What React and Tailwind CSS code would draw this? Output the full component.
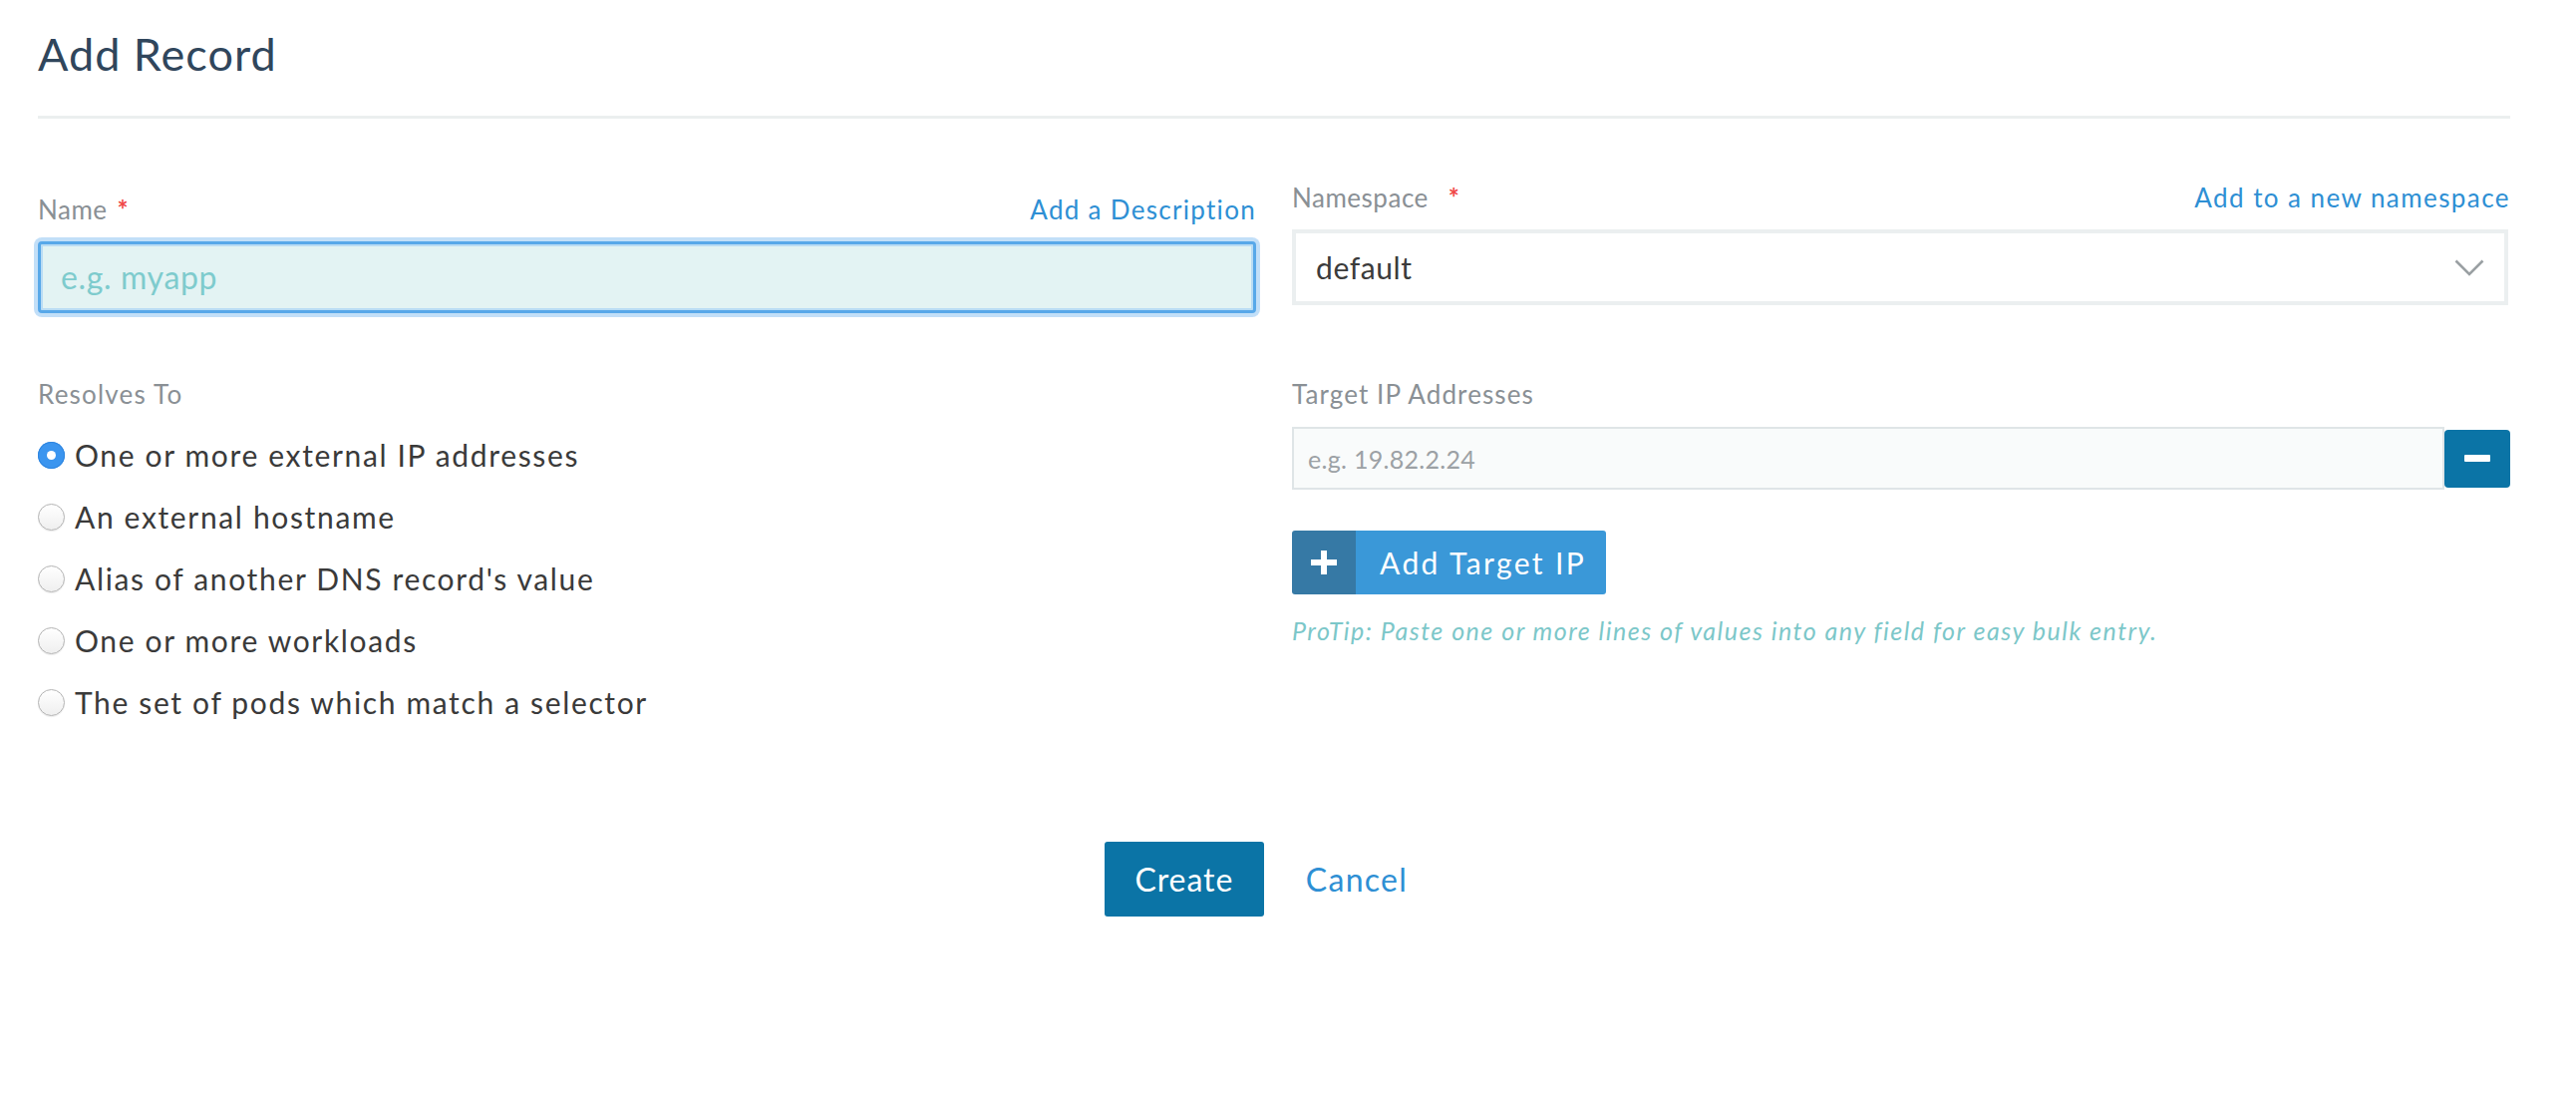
import React from "react";

function Radio({ checked }) {
  if (checked) {
    return (
      <span className="mt-[5px] flex h-[27px] w-[27px] shrink-0 items-center justify-center rounded-full bg-[#3b95ef] shadow-[inset_0_0_0_1px_#2f86e0]">
        <span className="h-[9px] w-[9px] rounded-full bg-white" />
      </span>
    );
  }
  return (
    <span className="mt-[5px] block h-[27px] w-[27px] shrink-0 rounded-full border border-[#b3b3b3] bg-gradient-to-b from-white to-[#efefef] shadow-[0_1px_1px_rgba(0,0,0,0.08)]" />
  );
}

const options = [
  "One or more external IP addresses",
  "An external hostname",
  "Alias of another DNS record's value",
  "One or more workloads",
  "The set of pods which match a selector",
];

export default function App() {
  return (
    <div className="min-h-[1112px] w-[2584px] bg-white font-['Lato',sans-serif]">
      <div className="ml-[38px] w-[2480px] pt-[27px]">
        <h1 className="text-[45px] font-normal leading-[54px] tracking-[0.022em] text-[#30465c]">Add Record</h1>
        <div className="mt-[35px] h-[3px] bg-[#ebefef]" />

        {/* Row 1 */}
        <div className="mt-[64px] grid grid-cols-2 items-start gap-x-[36px]">
          <div className="pt-[12px]">
            <div className="flex items-baseline justify-between text-[26px] leading-[31px]">
              <span className="tracking-[0.02em] text-[#8a9095]">
                Name<span className="ml-[10px] text-[26px] font-bold text-[#f04848]">*</span>
              </span>
              <span className="tracking-[0.05em] text-[#2e8fd4]">Add a Description</span>
            </div>
            <div className="mt-[16px] flex h-[72px] items-center rounded-[4px] border-[3px] border-[#58a8e9] bg-[#e3f3f3] pl-[20px] shadow-[0_0_0_4px_rgba(120,185,240,0.45),inset_0_0_0_2px_#b9dcf4]">
              <span className="text-[32px] leading-[38px] tracking-[0.02em] text-[#7ecbcd]">e.g. myapp</span>
            </div>
          </div>
          <div>
            <div className="flex items-baseline justify-between text-[26px] leading-[31px]">
              <span className="tracking-[0.02em] text-[#8a9095]">
                Namespace<span className="ml-[20px] text-[26px] font-bold text-[#f04848]">*</span>
              </span>
              <span className="tracking-[0.055em] text-[#2e8fd4]">Add to a new namespace</span>
            </div>
            <div className="mt-[16px] flex h-[76px] w-[1220px] items-center justify-between border-[4px] border-[#ebeff0] bg-white pl-[20px] pr-[20px]">
              <span className="text-[30px] leading-[36px] tracking-[0.02em] text-[#3b3b3b]">default</span>
              <svg width="30" height="17" viewBox="0 0 30 17" fill="none">
                <path d="M1.5 1.5 L15 15 L28.5 1.5" stroke="#9aa0a3" strokeWidth="2.6" />
              </svg>
            </div>
          </div>
        </div>

        {/* Row 2 */}
        <div className="mt-[66px] grid grid-cols-2 items-start gap-x-[36px]">
          <div>
            <div className="text-[26px] leading-[31px] tracking-[1.2px] text-[#8a9095]">Resolves To</div>
            <div className="mt-[27px] flex flex-col gap-[26px]">
              {options.map((o, i) => (
                <div key={o} className="flex h-[36px] items-start gap-[10px]">
                  <Radio checked={i === 0} />
                  <span className="text-[30px] leading-[36px] tracking-[1.65px] text-[#3a3a3a]">{o}</span>
                </div>
              ))}
            </div>
          </div>
          <div>
            <div className="text-[26px] leading-[31px] tracking-[1.1px] text-[#8a9095]">Target IP Addresses</div>
            <div className="mt-[17px] flex items-center">
              <div className="flex h-[63px] w-[1159px] items-center border-2 border-[#dfe5e7] bg-[#f9fbfb] pl-[14px]">
                <span className="text-[25px] leading-[30px] tracking-[0.3px] text-[#9ca1a5]">e.g. 19.82.2.24</span>
              </div>
              <div className="flex h-[58px] w-[66px] items-center justify-center rounded-[4px] bg-[#0b74a6]">
                <span className="block h-[7px] w-[26px] rounded-[1px] bg-white" />
              </div>
            </div>
            <div className="mt-[41px] flex h-[64px] w-fit overflow-hidden rounded-[3px]">
              <div className="flex w-[64px] items-center justify-center bg-[#3679a5]">
                <svg width="26" height="24" viewBox="0 0 26 24">
                  <rect x="0" y="9" width="26" height="6" fill="#ffffff" />
                  <rect x="10" y="0" width="6" height="24" fill="#ffffff" />
                </svg>
              </div>
              <div className="flex items-center bg-[#3a98d8] pl-[24px] pr-[20px]">
                <span className="text-[30px] leading-[36px] tracking-[0.08em] text-white">Add Target IP</span>
              </div>
            </div>
            <div className="mt-[22px] text-[25px] italic leading-[29px] tracking-[1.5px] text-[#7cc7c9]">
              ProTip: Paste one or more lines of values into any field for easy bulk entry.
            </div>
          </div>
        </div>

        {/* Footer */}
        <div className="mt-[122px] flex justify-center gap-[6px]">
          <button className="flex h-[75px] w-[160px] items-center justify-center rounded-[3px] bg-[#0b74a6] text-[32px] leading-[38px] tracking-[0.03em] text-white">
            Create
          </button>
          <button className="flex h-[75px] items-center px-[36px] text-[32px] leading-[38px] tracking-[0.04em] text-[#2e8fd4]">
            Cancel
          </button>
        </div>
      </div>
    </div>
  );
}
